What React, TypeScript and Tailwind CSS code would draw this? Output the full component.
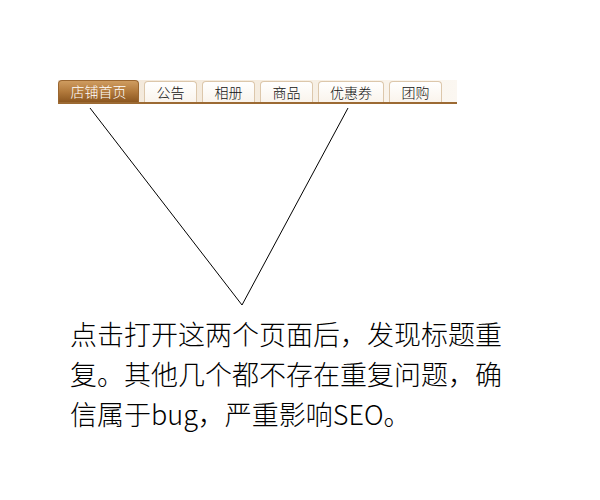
import React from 'react';

// 店铺导航标签
const tabs = [
  { label: '店铺首页', width: 'w-[81px]', active: true },
  { label: '公告', width: 'w-[53px]' },
  { label: '相册', width: 'w-[53px]' },
  { label: '商品', width: 'w-[53px]' },
  { label: '优惠券', width: 'w-[66px]' },
  { label: '团购', width: 'w-[53px]' },
];

const font = { fontFamily: '"Microsoft YaHei", "Noto Sans CJK SC", "Noto Sans", sans-serif' };

const TabBar: React.FC = () => (
  <div className="ml-[58px] flex h-[24px] w-[399px] items-end gap-[5px] border-b-[2px] border-[#9c6a33] bg-gradient-to-r from-[#f3e8da] via-[#f5ecdf] to-[#fbf7f1]">
    {tabs.map((t) => (
      <div
        key={t.label}
        className={
          t.active
            ? `${t.width} flex h-[22px] items-center justify-center rounded-t-[4px] border border-b-0 border-[#9a6630] bg-gradient-to-b from-[#cf9c60] via-[#b27a3c] to-[#8c5720] text-[14px] font-light text-white`
            : `${t.width} flex h-[21px] items-center justify-center rounded-t-[4px] border border-b-0 border-[#dcc7ab] bg-gradient-to-b from-[#ffffff] to-[#faf4ec] text-[14px] font-light text-[#111]`
        }
        style={font}
      >
        {t.label}
      </div>
    ))}
  </div>
);

const App: React.FC = () => {
  return (
    <div className="h-[500px] w-[600px] overflow-hidden bg-white pt-[80px]">
      <TabBar />

      {/* 指向两个标签的连线 */}
      <svg width="600" height="210" className="block">
        <polyline
          points="90,4 242,201 348,4"
          fill="none"
          stroke="#000"
          strokeWidth="1"
        />
      </svg>

      <p
        className="ml-[70px] w-[440px] text-[27px] font-light leading-[40px] text-black"
        style={font}
      >
        点击打开这两个页面后，发现标题重复。其他几个都不存在重复问题，确信属于bug，严重影响SEO。
      </p>
    </div>
  );
};

export default App;
